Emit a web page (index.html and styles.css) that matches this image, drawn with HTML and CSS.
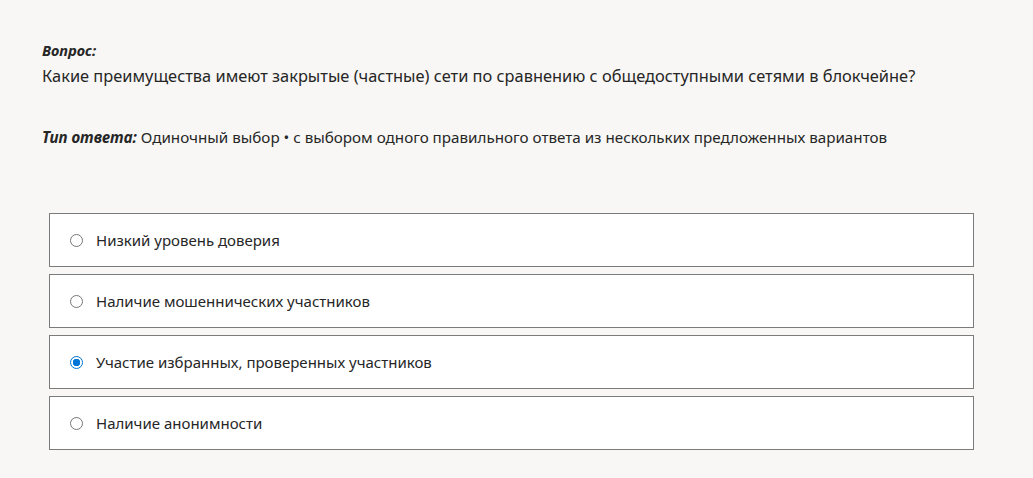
FILE: index.html
```html
<!DOCTYPE html>
<html lang="ru">
<head>
<meta charset="utf-8">
<link rel="stylesheet" href="styles.css">
</head>
<body>
<main class="page">
  <section class="question">
    <div class="label">Вопрос:</div>
    <p class="text">Какие преимущества имеют закрытые (частные) сети по сравнению с общедоступными сетями в блокчейне?</p>
  </section>
  <p class="type"><span class="type-label">Тип ответа:</span> Одиночный выбор • с выбором одного правильного ответа из нескольких предложенных вариантов</p>
  <ul class="options">
    <li class="option"><span class="radio"></span><span>Низкий уровень доверия</span></li>
    <li class="option"><span class="radio"></span><span>Наличие мошеннических участников</span></li>
    <li class="option"><span class="radio checked"></span><span>Участие избранных, проверенных участников</span></li>
    <li class="option"><span class="radio"></span><span>Наличие анонимности</span></li>
  </ul>
</main>
</body>
</html>
```
FILE: styles.css
```css
html, body {
  margin: 0;
  padding: 0;
  background: #f8f7f5;
}
body {
  font-family: "Noto Sans", "Open Sans", sans-serif;
  color: #262626;
}
.page {
  padding: 40px 0 0 42px;
  width: 932px;
}
.question .label {
  font-size: 14.6px;
  font-weight: 700;
  font-style: italic;
  line-height: 20px;
}
.question .text {
  margin: 4px 0 0;
  font-size: 16.4px;
  line-height: 24px;
}
.type {
  margin: 38px 0 0;
  font-size: 15.2px;
  line-height: 22px;
}
.type-label {
  font-weight: 700;
  font-style: italic;
}
.options {
  list-style: none;
  margin: 65px 0 0 7px;
  padding: 0;
  display: flex;
  flex-direction: column;
  gap: 7px;
}
.option {
  box-sizing: border-box;
  height: 54px;
  border: 1px solid #7b7b7b;
  background: #fff;
  display: flex;
  align-items: center;
  gap: 13px;
  padding-left: 20px;
  font-size: 15px;
}
.radio {
  box-sizing: border-box;
  width: 13px;
  height: 13px;
  border: 1px solid #767676;
  border-radius: 50%;
  background: #fff;
  flex: none;
}
.radio.checked {
  border-color: #0075d8;
  background: radial-gradient(circle, #0075d8 0 3.5px, #fff 4px);
}
```
